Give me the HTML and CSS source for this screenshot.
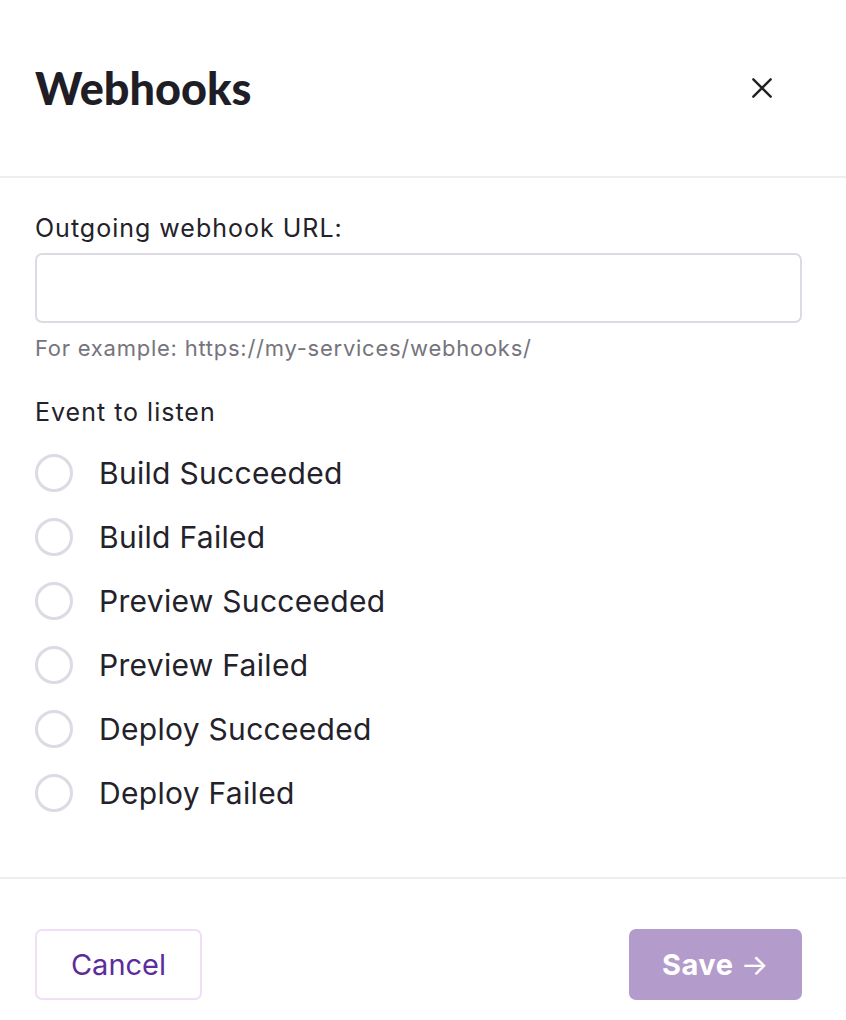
FILE: index.html
```html
<!DOCTYPE html>
<html lang="en">
  <head>
    <meta charset="UTF-8" />
    <meta name="viewport" content="width=device-width, initial-scale=1.0" />
    <title>Webhooks</title>
    <link rel="stylesheet" href="styles.css">
  </head>
  <body>
    <div class="modal">
      <!-- Modal Header -->
      <header class="modal-header">
        <h1>Webhooks</h1>
        <button class="close-btn" type="button" aria-label="Close">
          <svg width="26" height="26" viewBox="0 0 24 24" fill="none" stroke="#222" stroke-width="2.2" stroke-linecap="round">
            <path d="M4 4 L20 20 M20 4 L4 20" />
          </svg>
        </button>
      </header>

      <!-- Modal Body -->
      <form class="modal-body" id="webhook-form">
        <label class="field-label" for="webhook-url">Outgoing webhook URL:</label>
        <input class="text-input" id="webhook-url" type="text" />
        <p class="hint">For example: https://my-services/webhooks/</p>

        <p class="field-label events-title">Event to listen</p>
        <ul class="event-list">
          <li><label class="event"><span class="radio"></span>Build Succeeded</label></li>
          <li><label class="event"><span class="radio"></span>Build Failed</label></li>
          <li><label class="event"><span class="radio"></span>Preview Succeeded</label></li>
          <li><label class="event"><span class="radio"></span>Preview Failed</label></li>
          <li><label class="event"><span class="radio"></span>Deploy Succeeded</label></li>
          <li><label class="event"><span class="radio"></span>Deploy Failed</label></li>
        </ul>
      </form>

      <!-- Modal Footer -->
      <footer class="modal-footer">
        <button class="btn btn-cancel" type="button">Cancel</button>
        <button class="btn btn-save" type="submit" form="webhook-form">Save <span class="arrow">→</span></button>
      </footer>
    </div>
  </body>
</html>
```

FILE: styles.css
```css
body {
  margin: 0;
  background-color: #ffffff;
  font-family: "Inter", "Noto Sans", sans-serif;
  color: #23222b;
}
.modal {
  width: 100%;
}
.modal-header {
  display: flex;
  align-items: center;
  justify-content: space-between;
  height: 178px;
  padding: 0 35px;
  border-bottom: 2px solid #eeeeef;
  box-sizing: border-box;
}
.modal-header h1 {
  margin: 0;
  font-family: "Lato", sans-serif;
  font-weight: 900;
  font-size: 45px;
  color: #1f1e26;
}
.close-btn {
  display: flex;
  margin-right: 36px;
  padding: 0;
  border: none;
  background: none;
  cursor: pointer;
}
.modal-body {
  padding: 34px 44px 52px 35px;
}
.field-label {
  display: block;
  margin: 0;
  font-size: 25px;
  letter-spacing: 1px;
  line-height: 32px;
}
.text-input {
  display: block;
  width: 100%;
  height: 70px;
  margin-top: 9px;
  border: 2px solid #dcdbe3;
  border-radius: 7px;
  box-sizing: border-box;
  font-size: 22px;
  padding: 0 16px;
}
.hint {
  margin: 11px 0 0;
  font-size: 22px;
  letter-spacing: 0.75px;
  line-height: 28px;
  color: #75747c;
}
.events-title {
  margin-top: 34px;
}
.event-list {
  margin: 13px 0 0;
  padding: 0;
  list-style: none;
}
.event {
  display: flex;
  align-items: center;
  column-gap: 26px;
  height: 64px;
  font-size: 30px;
  letter-spacing: 0.3px;
  cursor: pointer;
}
.radio {
  width: 38px;
  height: 38px;
  border: 3px solid #dcdbe3;
  border-radius: 50%;
  box-sizing: border-box;
}
.modal-footer {
  display: flex;
  justify-content: space-between;
  padding: 50px 44px 21px 35px;
  border-top: 2px solid #eeeeef;
}
.btn {
  height: 71px;
  border-radius: 7px;
  font-family: "Inter", "Noto Sans", sans-serif;
  font-size: 29px;
  cursor: pointer;
}
.btn-cancel {
  width: 167px;
  background-color: #ffffff;
  border: 2px solid #f1def9;
  color: #5c2c9b;
}
.btn-save {
  width: 173px;
  background-color: #b39bcb;
  border: none;
  color: #ffffff;
  font-weight: 700;
  letter-spacing: 0.5px;
}
.btn-save .arrow {
  font-weight: 400;
}
```
